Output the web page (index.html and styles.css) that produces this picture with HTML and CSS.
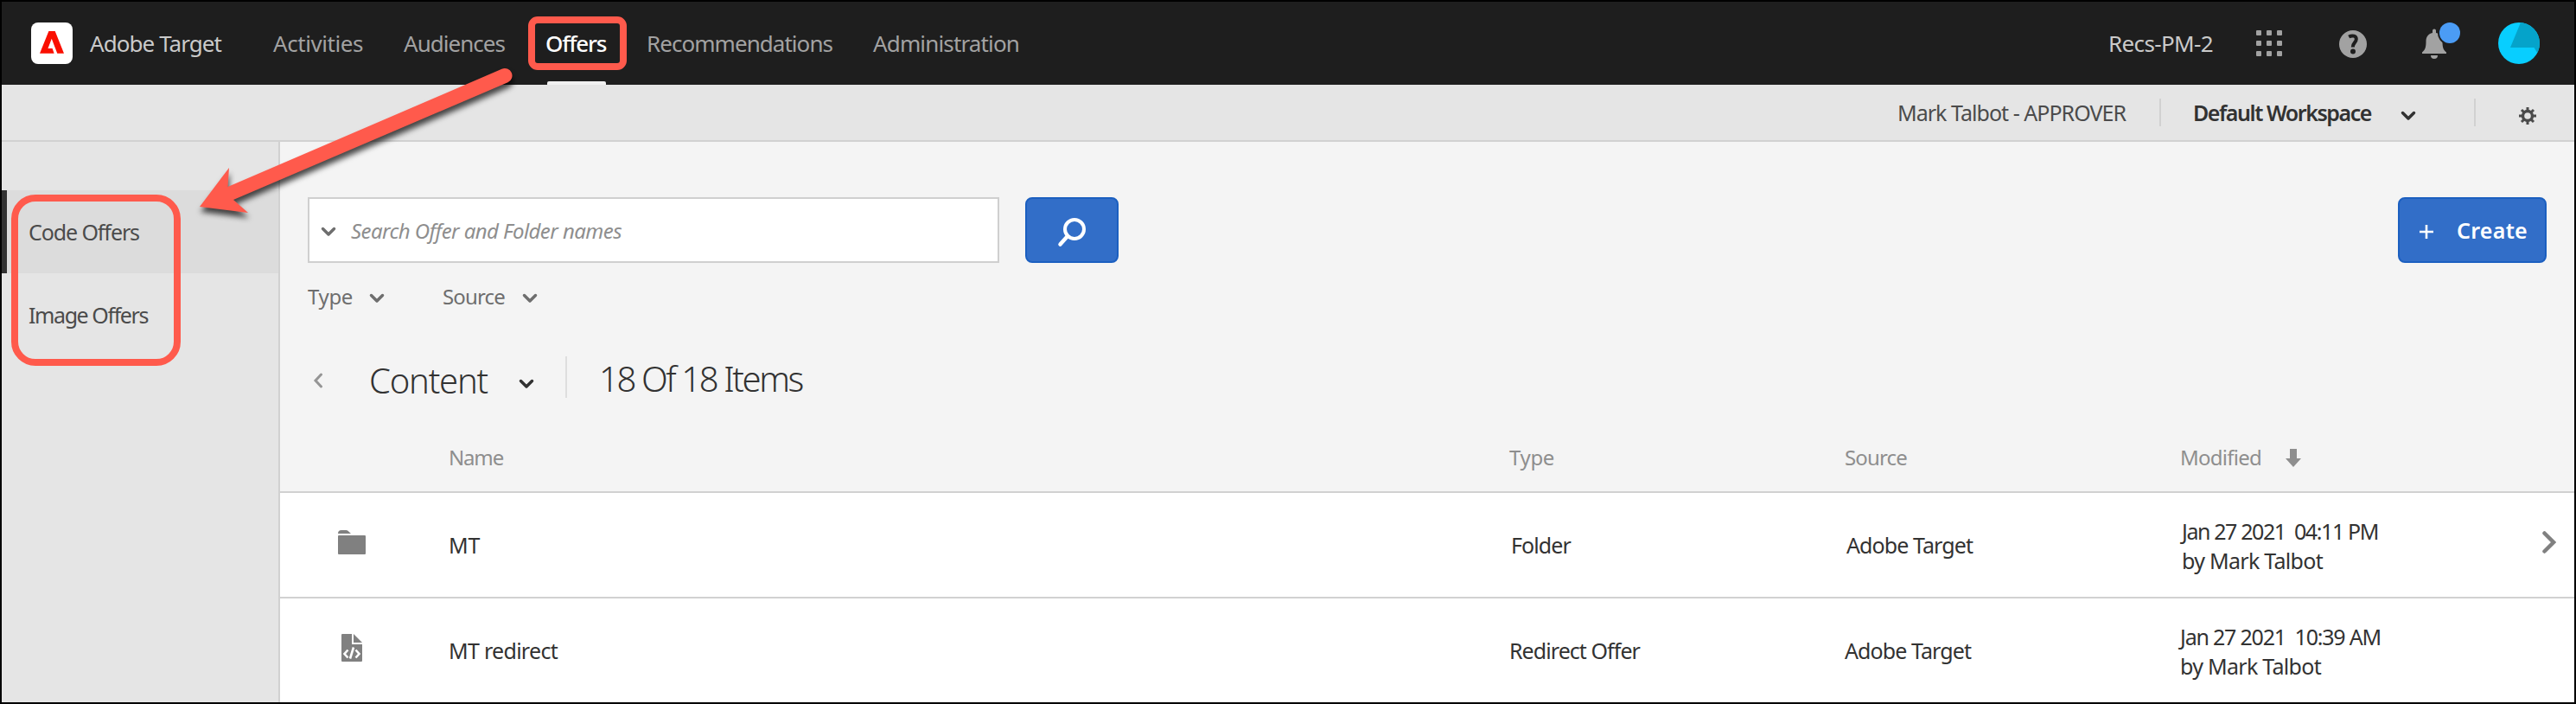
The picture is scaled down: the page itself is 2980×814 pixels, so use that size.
FILE: index.html
```html
<!DOCTYPE html>
<html lang="en">
<head>
<meta charset="utf-8">
<title>Adobe Target</title>
<link rel="stylesheet" href="styles.css">
</head>
<body>
<div class="app">
  <header class="topbar">
    <svg class="logo" width="48" height="48" viewBox="0 0 48 48"><rect width="48" height="48" rx="8" fill="#fff"/><path transform="translate(10 9.600) scale(1.167 1.210)" d="M14.235 21.621 12.493 16.770H8.117L11.795 7.512 17.374 21.621H24L15.155.379H8.909L0 21.621z" fill="#fa0f00"/></svg>
    <span class="brand"><span data-w="151">Adobe Target</span></span>
    <nav class="nav">
      <a class="n1"><span data-w="103">Activities</span></a>
      <a class="n2"><span data-w="116">Audiences</span></a>
      <a class="n3 active"><span data-w="69">Offers</span></a>
      <a class="n4"><span data-w="214">Recommendations</span></a>
      <a class="n5"><span data-w="168">Administration</span></a>
    </nav>
    <div class="tools">
      <span class="tenant"><span data-w="120">Recs-PM-2</span></span>
      <svg class="apps" width="30" height="30" fill="#a2a2a2"><rect width="6" height="6" rx="1"/><rect x="12" width="6" height="6" rx="1"/><rect x="24" width="6" height="6" rx="1"/><rect y="12" width="6" height="6" rx="1"/><rect x="12" y="12" width="6" height="6" rx="1"/><rect x="24" y="12" width="6" height="6" rx="1"/><rect y="24" width="6" height="6" rx="1"/><rect x="12" y="24" width="6" height="6" rx="1"/><rect x="24" y="24" width="6" height="6" rx="1"/></svg>
      <svg class="help" width="32" height="32"><circle cx="16" cy="16" r="16" fill="#a2a2a2"/><path d="M11.200 7.600C15.500 5.300 19.800 6.500 19.800 10.300c0 4-4.300 4.400-4 9.200" fill="none" stroke="#1e1e1e" stroke-width="4"/><circle cx="16" cy="24.500" r="3" fill="#1e1e1e"/></svg>
      <svg class="bell" width="44" height="44"><path d="M12 12V9.500a2 2 0 0 1 4 0V12c5 1.200 7.500 4.500 7.500 10 0 8 1.500 10 4.500 12.500V36H0v-1.500C3 32 4.500 30 4.500 22c0-5.500 2.500-8.800 7.500-10z" fill="#a2a2a2"/><path d="M10 38h8a4 4 0 0 1-8 0z" fill="#a2a2a2"/><circle cx="32" cy="12" r="14" fill="#1e1e1e"/><circle cx="32" cy="12" r="12" fill="#4b9cf5"/></svg>
      <svg class="avatar" width="48" height="48"><circle cx="24" cy="24" r="24" fill="#08ceff"/><path d="M26 .1 14 29h27.500l3.700 6A24 24 0 0 0 26 .1z" fill="#05a3ca"/></svg>
    </div>
  </header>
  <div class="subbar">
    <span class="user"><span data-w="263">Mark Talbot - APPROVER</span></span>
    <i class="sep"></i>
    <span class="workspace"><span data-w="205">Default Workspace</span></span>
    <svg class="chev" width="18" height="12"><path d="M2.500 2.500 9 9l6.500-6.500"/></svg>
    <i class="sep sep2"></i>
    <svg class="gear" width="20" height="20" viewBox="0 0 20 20"><circle cx="10" cy="10" r="5.500" fill="none" stroke="#4b4b4b" stroke-width="3.400"/><path d="M10 0v4M10 16v4M0 10h4M16 10h4M3 3l2.800 2.800M14.200 14.200 17 17M3 17l2.800-2.800M14.200 5.800 17 3" stroke="#4b4b4b" stroke-width="3"/></svg>
  </div>
  <div class="body">
    <aside class="side">
      <a class="item selected"><span data-w="127">Code Offers</span></a>
      <a class="item"><span data-w="137">Image Offers</span></a>
    </aside>
    <main class="main">
      <div class="searchrow">
        <div class="search">
          <svg class="chev" width="18" height="12"><path d="M2.500 2.500 9 9l6.500-6.500"/></svg>
          <span class="ph"><span data-w="312">Search Offer and Folder names</span></span>
        </div>
        <div class="btn find"><svg width="36" height="36"><circle cx="21" cy="14" r="11" fill="none" stroke="#fff" stroke-width="4"/><path d="M13 22 4.500 31.500" stroke="#fff" stroke-width="4.500" stroke-linecap="round"/></svg></div>
        <div class="btn create"><svg width="16" height="16"><path d="M8 0v16M0 8h16" stroke="#fff" stroke-width="2.600"/></svg><span data-w="81">Create</span></div>
      </div>
      <div class="filters">
        <span class="f1"><span data-w="51">Type</span></span><svg class="chev" width="18" height="12"><path d="M2.500 2.500 9 9l6.500-6.500"/></svg>
        <span class="f2"><span data-w="71">Source</span></span><svg class="chev" width="18" height="12"><path d="M2.500 2.500 9 9l6.500-6.500"/></svg>
      </div>
      <div class="titlebar">
        <svg class="back" width="12" height="18"><path d="M9.500 2 3 9l6.500 7" fill="none" stroke="#959595" stroke-width="3" stroke-linecap="round"/></svg>
        <h1 class="content"><span data-w="136">Content</span></h1>
        <svg class="chev" width="18" height="12"><path d="M2.500 2.500 9 9l6.500-6.500"/></svg>
        <i class="tsep"></i>
        <h2 class="count"><span data-w="234">18 Of 18 Items</span></h2>
      </div>
      <div class="row head">
        <span></span><span><span data-w="62">Name</span></span><span><span data-w="51">Type</span></span><span><span data-w="71">Source</span></span>
        <span class="mod"><span data-w="93">Modified</span><svg width="18" height="21"><path d="M5 0h8v11h5l-9 10-9-10h5z" fill="#8e8e8e"/></svg></span><span></span>
      </div>
      <div class="row r1">
        <span class="ico"><svg width="32" height="28" fill="#808080"><path d="M0 4a4 4 0 0 1 4-4h5.500a3 3 0 0 1 2 .8L15 4z"/><rect y="6" width="32" height="22" rx="1"/></svg></span>
        <span><span data-w="35">MT</span></span><span class="nud"><span data-w="68">Folder</span></span><span class="nud"><span data-w="145">Adobe Target</span></span>
        <span class="date nud"><span data-w="226">Jan 27 2021&nbsp; 04:11 PM</span><br><span data-w="162">by Mark Talbot</span></span>
        <svg class="go" width="16" height="26"><path d="M2.500 2.500 13 13 2.500 23.500" fill="none" stroke="#808080" stroke-width="4.500" stroke-linecap="round"/></svg>
      </div>
      <div class="row r2">
        <span class="ico"><svg width="24" height="32"><path d="M1 0h11v12h12v19a1 1 0 0 1-1 1H1a1 1 0 0 1-1-1V1a1 1 0 0 1 1-1z" fill="#808080"/><path d="M14 0l10 10H14z" fill="#808080"/><path d="M7.500 18.500 3.500 23l4 4.500M16.500 18.500l4 4.500-4 4.500M14 15.500l-4 13" fill="none" stroke="#fff" stroke-width="2.600"/></svg></span>
        <span><span data-w="125">MT redirect</span></span><span><span data-w="150">Redirect Offer</span></span><span><span data-w="145">Adobe Target</span></span>
        <span class="date"><span data-w="231">Jan 27 2021&nbsp; 10:39 AM</span><br><span data-w="162">by Mark Talbot</span></span>
        <span></span>
      </div>
    </main>
  </div>
  <div class="mark mark-tab"></div>
  <div class="mark mark-side"></div>
  <svg class="arrow" width="400" height="200" viewBox="220 70 400 200"><path d="M231 239 265 194l-1.500 22L580.500 79.800a8.500 8.500 0 0 1 7 15.500L270 231l17 15z" fill="#ff5a4c"/></svg>
</div>
<script src="fit.js"></script>
</body>
</html>
```
FILE: styles.css
```css
* { box-sizing: border-box; }
body { margin: 0; font-family: "Noto Sans", "Open Sans", sans-serif; font-size: 25px; line-height: 34px; color: #323232; }
h1, h2 { margin: 0; font-weight: 300; }
svg { display: block; flex: none; }
[data-w] { white-space: nowrap; }
.app { position: relative; width: 2980px; height: 814px; border: 2px solid #000; background: #f4f4f4; overflow: hidden; display: flex; flex-direction: column; }

.topbar { height: 96px; flex: none; display: flex; align-items: center; background: #1e1e1e; padding-left: 34px; padding-right: 40px; font-size: 26px; }
.brand { margin-left: 20px; width: 212px; color: #cacaca; }
.nav { display: flex; height: 96px; line-height: 96px; color: #a2a2a2; }
.n1 { width: 151px; }
.n2 { width: 164px; }
.n3 { width: 117px; }
.n4 { width: 262px; }
.active { color: #fff; font-weight: 500; position: relative; }
.active::after { content: ""; position: absolute; left: 2px; bottom: 0; width: 68px; height: 4px; border-radius: 2px 2px 0 0; background: #f0f0f0; }
.tools { margin-left: auto; display: flex; align-items: center; }
.tenant { width: 171px; color: #cacaca; }
.help { margin-left: 66px; margin-top: 2px; }
.bell { margin-left: 64px; margin-top: -4px; }
.avatar { margin-left: 44px; }

.subbar { height: 66px; flex: none; display: flex; align-items: center; justify-content: flex-end; background: #e5e5e5; border-bottom: 2px solid #d1d1d1; color: #4b4b4b; padding-right: 44px; }
.user { width: 265px; }
.sep { width: 2px; height: 32px; background: #d1d1d1; margin-left: 38px; }
.workspace { margin-left: 37px; width: 207px; font-weight: 600; color: #323232; }
.subbar .chev { margin-left: 33px; margin-top: 8px; stroke: #323232; }
.sep2 { margin-left: 67px; }
.gear { margin-left: 50px; margin-top: 8px; }
.chev { fill: none; stroke: #6e6e6e; stroke-width: 3.500; stroke-linecap: round; stroke-linejoin: round; }

.body { display: flex; flex: 1; min-height: 0; }
.side { width: 322px; border-right: 2px solid #d1d1d1; background: #e5e5e5; padding-top: 56px; color: #4b4b4b; }
.item { display: block; height: 96px; line-height: 97px; padding-left: 31px; }
.selected { background: #dcdcdc; border-left: 6px solid #323232; padding-left: 25px; }
.main { flex: 1; min-width: 0; }
.searchrow { display: flex; padding: 64px 32px 0; height: 140px; }
.search { width: 800px; height: 76px; border: 2px solid #cfcfcf; background: #fff; display: flex; align-items: center; padding-left: 13px; }
.search .chev { margin-top: 4px; }
.ph { margin-left: 17px; margin-top: 2px; font-style: italic; color: #8e8e8e; font-size: 24px; }
.btn { height: 76px; border-radius: 8px; border: 2px solid #1b5fc0; background: #326ec8; display: flex; align-items: center; color: #fff; font-weight: 600; }
.find { width: 108px; margin-left: 30px; padding-left: 34px; }
.find svg { margin-top: 6px; }
.create { width: 172px; margin-left: auto; padding-left: 23px; gap: 27px; }
.create svg { margin-top: 4px; }
.filters { display: flex; align-items: center; height: 78px; padding-left: 32px; color: #6e6e6e; font-size: 24px; }
.f1 { width: 71px; }
.f2 { width: 92px; margin-left: 67px; }
.filters .chev { margin-top: 4px; }
.titlebar { display: flex; align-items: center; height: 108px; padding-left: 38px; line-height: 56px; }
.back { margin-top: 8px; }
.content { margin-left: 53px; width: 138px; font-size: 40px; margin-top: 8px; }
.titlebar .chev { stroke: #323232; margin-left: 35px; margin-top: 15px; }
.tsep { width: 2px; height: 48px; background: #dedede; margin-left: 36px; }
.count { margin-left: 37px; font-size: 40px; margin-top: 4px; }
.row { display: grid; grid-template-columns: 195px 1227px 388px 388px 419px 1fr; align-items: center; background: #fff; border-top: 2px solid #d1d1d1; height: 122px; }
.head { background: #f4f4f4; border: 0; height: 78px; color: #8e8e8e; font-size: 24px; }
.mod { display: flex; align-items: center; gap: 28px; }
.ico, .go { margin-bottom: 6px; }
.date { padding-top: 2px; }
.r1 .ico { padding-left: 67px; }
.r2 .ico { padding-left: 71px; }
.nud { padding-left: 2px; }

.mark { position: absolute; border: 8px solid #ff5a4c; }
.mark-tab { left: 609px; top: 17px; width: 114px; height: 62px; border-radius: 11px; }
.mark-side { left: 11px; top: 223px; width: 196px; height: 198px; border-radius: 28px; }
.arrow { position: absolute; left: 218px; top: 68px; filter: drop-shadow(1px 6px 3px rgba(0,0,0,.7)); }
```
FILE: fit.js
```js
document.querySelectorAll('[data-w]').forEach(function (el) {
  var natural = el.getBoundingClientRect().width;
  var target = parseFloat(el.dataset.w) + 1;
  el.style.letterSpacing = (target - natural) / el.textContent.length + 'px';
});
```
